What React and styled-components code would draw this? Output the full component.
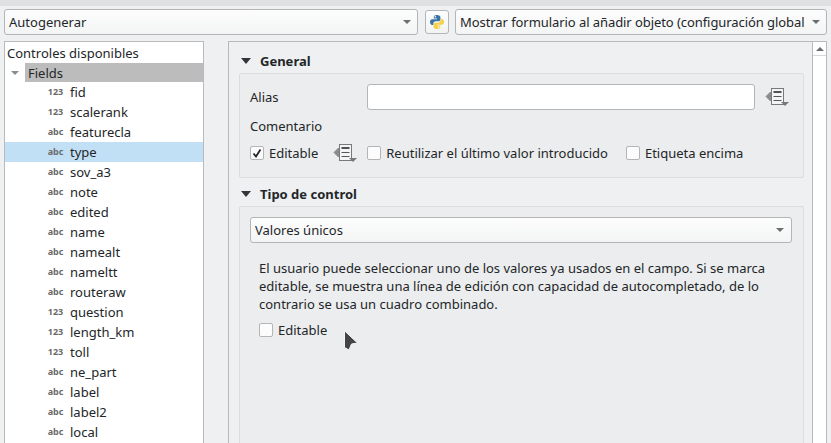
import React from "react";
import styled, { createGlobalStyle } from "styled-components";

const Global = createGlobalStyle`
  html, body { margin: 0; padding: 0; height: 100%; overflow: hidden; background: #eff0f1; }
  #root { height: 100%; }
  * { box-sizing: border-box; }
`;

const Page = styled.div`
  position: relative;
  width: 831px;
  height: 443px;
  overflow: hidden;
  display: flex;
  flex-direction: column;
  background: #eff0f1;
  color: #232629;
  font-family: "Noto Sans", sans-serif;
  font-size: 13px;
`;
const TopStrip = styled.div`
  height: 6px;
  flex: none;
  background: #e0e1e3;
`;
const Toolbar = styled.div`
  display: flex;
  align-items: center;
  height: 26px;
  margin: 3px 4px 0 4px;
  flex: none;
`;
const Combo = styled.div`
  position: relative;
  display: flex;
  align-items: center;
  height: 26px;
  width: ${p => p.$w}px;
  margin-left: ${p => p.$ml || 0}px;
  padding: 0 21px 0 4px;
  border: 1px solid #b4b5b6;
  border-radius: 3px;
  background: linear-gradient(#fdfdfd, #f3f4f4);
  white-space: nowrap;
  overflow: hidden;
  flex: none;
`;
const ComboText = styled.span`
  overflow: hidden;
  display: block;
  flex: 1;
  letter-spacing: ${p => p.$tight ? "-0.07px" : "normal"};
`;
const Arrow = styled.span`
  position: absolute;
  right: ${p => p.$r || 6}px;
  top: 50%;
  margin-top: -2px;
  width: 0;
  height: 0;
  border-left: 4px solid transparent;
  border-right: 4px solid transparent;
  border-top: 4px solid #6b6d6f;
`;
const PyButton = styled.div`
  width: 24px;
  height: 24px;
  margin-left: 7px;
  flex: none;
  display: flex;
  align-items: center;
  justify-content: center;
  border: 1px solid #b4b5b6;
  border-radius: 3px;
  background: linear-gradient(#fdfdfd, #f1f2f2);
`;
const Body = styled.div`
  display: flex;
  flex: 1;
  min-height: 0;
  margin: 6px 4px 0 4px;
`;
const TreePanel = styled.div`
  width: 200px;
  flex: none;
  border: 1px solid #b9babb;
  border-bottom: none;
  background: #fff;
  overflow: hidden;
`;
const TreeHeader = styled.div`
  height: 21px;
  line-height: 22px;
  padding-left: 2px;
`;
const RootRow = styled.div`
  display: flex;
  height: 19px;
  align-items: center;
`;
const Expander = styled.div`
  width: 20px;
  flex: none;
  display: flex;
  justify-content: center;
  padding-top: 1px;
`;
const ExpanderArrow = styled.span`
  width: 0;
  height: 0;
  border-left: 4px solid transparent;
  border-right: 4px solid transparent;
  border-top: 4px solid #8a8b8d;
`;
const RootLabel = styled.div`
  flex: 1;
  height: 19px;
  line-height: 20px;
  background: #bcbcbc;
  padding-left: 3px;
`;
const FieldRow = styled.div`
  display: flex;
  align-items: center;
  height: 20px;
  padding-left: 36px;
  background: ${p => (p.$selected ? "#c2e0f5" : "transparent")};
`;
const TypeBadge = styled.span`
  width: 29px;
  flex: none;
  font-size: 9px;
  font-weight: 700;
  color: #6a6a6a;
  text-align: center;
  position: relative;
  top: -1px;
`;
const Splitter = styled.div`
  width: 24px;
  flex: none;
`;
const RightPanel = styled.div`
  flex: 1;
  display: flex;
  border: 1px solid #b9babb;
  border-bottom: none;
  min-width: 0;
`;
const Content = styled.div`
  flex: 1;
  min-width: 0;
  padding: 9px 8px 0 10px;
`;
const Scrollbar = styled.div`
  width: 14px;
  flex: none;
  border-left: 1px solid #b9babb;
  background: #fff;
`;
const ScrollUp = styled.div`
  height: 14px;
  border-bottom: 1px solid #d5d6d7;
  display: flex;
  align-items: center;
  justify-content: center;
`;
const ScrollArrow = styled.span`
  width: 0;
  height: 0;
  border-left: 4px solid transparent;
  border-right: 4px solid transparent;
  border-bottom: 4px solid #6b6d6f;
`;
const SectionTitle = styled.div`
  display: flex;
  align-items: center;
  height: 20px;
  margin-top: ${p => p.$mt || 0}px;
  font-weight: 700;
  gap: 9px;
  padding-left: 2px;
`;
const SectionArrow = styled.span`
  width: 0;
  height: 0;
  border-left: 5px solid transparent;
  border-right: 5px solid transparent;
  border-top: 6px solid #31363b;
`;
const GroupBox = styled.div`
  margin-top: 2px;
  border: 1px solid #dcddde;
  border-radius: 2px;
  background: #ecedee;
  height: ${p => p.$h}px;
  padding: ${p => p.$pad};
`;
const AliasRow = styled.div`
  display: flex;
  align-items: center;
  height: 26px;
`;
const AliasLabel = styled.span`
  width: 117px;
  flex: none;
`;
const TextInput = styled.div`
  width: 388px;
  height: 26px;
  flex: none;
  background: #fff;
  border: 1px solid #b4b5b6;
  border-radius: 3px;
`;
const TextLine = styled.div`
  height: 18px;
  line-height: 18px;
  margin-top: ${p => p.$mt || 0}px;
`;
const CheckRow = styled.div`
  display: flex;
  align-items: center;
  height: 18px;
  margin-top: ${p => p.$mt || 0}px;
  margin-left: ${p => p.$ml || 0}px;
`;
const Check = styled.span`
  width: 14px;
  height: 14px;
  flex: none;
  border: 1px solid #b4b5b6;
  border-radius: 2px;
  background: #fcfcfc;
  display: flex;
  align-items: center;
  justify-content: center;
`;
const CheckLabel = styled.span`
  margin-left: 5px;
  margin-right: ${p => p.$mr || 0}px;
  white-space: nowrap;
`;
const Description = styled.div`
  margin: 16px 0 0 9px;
  line-height: 18px;
  width: 530px;
`;
const Cursor = styled.svg`
  position: absolute;
  left: 343px;
  top: 330px;
`;
const FormGlyph = styled.svg`
  flex: none;
  margin-left: ${p => p.$left || 0}px;
  margin-right: ${p => p.$right || 0}px;
`;

const FormIcon = ({ left, right }) => (
  <FormGlyph $left={left} $right={right} width="24" height="20" viewBox="0 0 24 20">
    <path d="M1 9.5 L5.5 5 V14 Z" fill="#8a8c8e" stroke="#8a8c8e" strokeWidth="1" strokeLinejoin="round" />
    <rect x="6.5" y="1.5" width="12" height="16" fill="#f4f4f5" stroke="#77797b" />
    <rect x="8.5" y="4" width="8" height="2" fill="#4f5153" />
    <rect x="8.5" y="9" width="8" height="1" fill="#55575a" />
    <rect x="8.5" y="13" width="8" height="1" fill="#55575a" />
    <path d="M16 15 H24 L20 19 Z" fill="#77797b" />
  </FormGlyph>
);

const PythonIcon = () => (
  <svg width="16" height="16" viewBox="0 0 16 16">
    <path d="M7.9 1C5.4 1 4.8 2 4.8 3V4.6H8V5.2H3.2C2 5.2 1 6.2 1 8s1 3 2.2 3h1.2V9.4c0-1.2 1-2.2 2.2-2.2h3c1 0 1.8-.8 1.8-1.8V3c0-1-1-2-3.5-2Z" fill="#3a75a8" />
    <path d="M8.1 15c2.5 0 3.1-1 3.1-2v-1.6H8v-.6h4.8c1.2 0 2.2-1 2.2-2.8s-1-3-2.2-3h-1.2v1.6c0 1.2-1 2.2-2.2 2.2h-3c-1 0-1.8.8-1.8 1.8V13c0 1 1 2 3.5 2Z" fill="#f5cf45" />
    <circle cx="6.3" cy="2.8" r=".8" fill="#fff" />
    <circle cx="9.7" cy="13.2" r=".8" fill="#fff" />
  </svg>
);

const fields = [
  ["123", "fid"], ["123", "scalerank"], ["abc", "featurecla"], ["abc", "type", true],
  ["abc", "sov_a3"], ["abc", "note"], ["abc", "edited"], ["abc", "name"],
  ["abc", "namealt"], ["abc", "nameltt"], ["abc", "routeraw"], ["123", "question"],
  ["123", "length_km"], ["123", "toll"], ["abc", "ne_part"], ["abc", "label"],
  ["abc", "label2"], ["abc", "local"],
];

export default function App() {
  return (
    <Page>
      <Global />
      <TopStrip />
      <Toolbar>
        <Combo $w={414}>
          <ComboText>Autogenerar</ComboText>
          <Arrow />
        </Combo>
        <PyButton><PythonIcon /></PyButton>
        <Combo $w={372} $ml={6}>
          <ComboText $tight>Mostrar formulario al añadir objeto (configuración global)</ComboText>
          <Arrow />
        </Combo>
      </Toolbar>
      <Body>
        <TreePanel>
          <TreeHeader>Controles disponibles</TreeHeader>
          <RootRow>
            <Expander><ExpanderArrow /></Expander>
            <RootLabel>Fields</RootLabel>
          </RootRow>
          {fields.map(([t, n, s]) => (
            <FieldRow key={n} $selected={s}>
              <TypeBadge>{t}</TypeBadge>
              <span>{n}</span>
            </FieldRow>
          ))}
        </TreePanel>
        <Splitter />
        <RightPanel>
          <Content>
            <SectionTitle><SectionArrow />General</SectionTitle>
            <GroupBox $h={105} $pad="10px 11px 0 10px">
              <AliasRow>
                <AliasLabel>Alias</AliasLabel>
                <TextInput />
                <FormIcon left={10} />
              </AliasRow>
              <TextLine $mt={7}>Comentario</TextLine>
              <CheckRow $mt={9}>
                <Check>
                  <svg width="12" height="12" viewBox="0 0 12 12">
                    <path d="M2.5 6.5 L5 9.5 L9.5 2.5" fill="none" stroke="#232629" strokeWidth="1.8" />
                  </svg>
                </Check>
                <CheckLabel>Editable</CheckLabel>
                <FormIcon left={15} right={10} />
                <Check />
                <CheckLabel $mr={18}>Reutilizar el último valor introducido</CheckLabel>
                <Check />
                <CheckLabel>Etiqueta encima</CheckLabel>
              </CheckRow>
            </GroupBox>
            <SectionTitle $mt={6}><SectionArrow />Tipo de control</SectionTitle>
            <GroupBox $h={300} $pad="10px 11px 0 10px">
              <Combo $w={542}>
                <ComboText>Valores únicos</ComboText>
                <Arrow $r={7} />
              </Combo>
              <Description>
                El usuario puede seleccionar uno de los valores ya usados en el campo. Si se marca editable, se muestra una línea de edición con capacidad de autocompletado, de lo contrario se usa un cuadro combinado.
              </Description>
              <CheckRow $mt={8} $ml={9}>
                <Check />
                <CheckLabel>Editable</CheckLabel>
              </CheckRow>
            </GroupBox>
          </Content>
          <Scrollbar>
            <ScrollUp><ScrollArrow /></ScrollUp>
          </Scrollbar>
        </RightPanel>
      </Body>
      <Cursor width="16" height="22" viewBox="0 0 16 22">
        <path d="M1.5 0.8 V17.5 L6 20 L8.5 14 L14.5 13 Z" fill="#444" stroke="#f5f5f5" strokeWidth="1" strokeLinejoin="round" />
      </Cursor>
    </Page>
  );
}
